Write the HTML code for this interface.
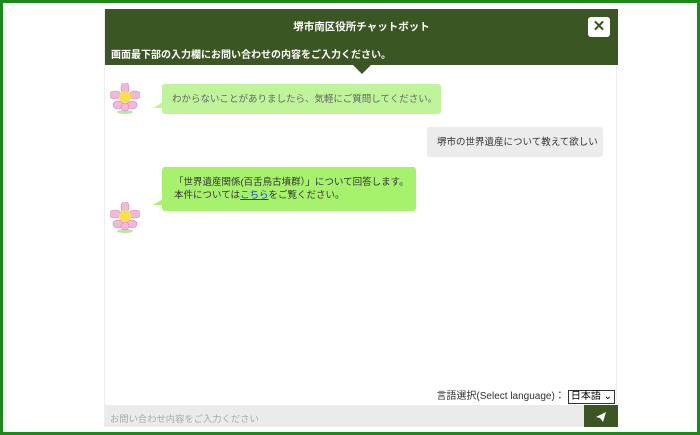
<!DOCTYPE html>
<html><head><meta charset="utf-8"><style>
*{margin:0;padding:0;box-sizing:border-box}
body{width:700px;height:435px;background:#fff;font-family:"Liberation Sans","Noto Sans CJK JP",sans-serif;position:relative;overflow:hidden}
.frame{position:absolute;left:0;top:0;width:700px;height:435px;border:3px solid #1b8a1b}
.panel{position:absolute;left:104px;top:9px;width:513px;height:418px;background:#fff;border-left:1px solid #eee;border-right:1px solid #eee}
.hdr{position:absolute;left:0;top:0;width:513px;height:56px;background:#3a5623;color:#fff}
.t{position:absolute;top:10px;width:100%;text-align:center;font-size:10.5px;font-weight:bold}
.s{position:absolute;top:37px;left:6px;font-size:10px;font-weight:bold}
.x{position:absolute;right:8px;top:8px;width:22px;height:20px;background:#fff;border-radius:3px;color:#3a5623;font-weight:bold;text-align:center;font-size:15px;line-height:20px}
.arr{position:absolute;left:248px;top:56px;border-left:9px solid transparent;border-right:9px solid transparent;border-top:9px solid #3a5623}
.b{position:absolute;font-size:9.5px;border-radius:3px;color:#444;white-space:nowrap;line-height:13px}
.b1{left:57px;top:75px;width:279px;height:30px;background:#bff49a;padding:9px 10px;color:#666}
.b1:before,.b3:before{content:"";position:absolute;left:-9px;bottom:6px;border-right:10px solid #bff49a;border-top:6px solid transparent}
.b3:before{border-right-color:#a7f26d}
.u{left:322px;top:118px;width:176px;height:30px;background:#ececec;padding:9px 10px;color:#333}
.b3{left:57px;top:158px;width:254px;height:44px;background:#a7f26d;padding:9px 12px;line-height:13px;color:#333}
.b3 a{color:#1a3fe0;text-decoration:underline}
.fl{position:absolute;width:30px;height:32px}
.lang{position:absolute;right:1px;top:381px;font-size:10px;color:#333;white-space:nowrap;line-height:14px}
.lang span{display:inline-block;border:1px solid #333;padding:0 2px;font-size:10px;color:#000;margin-left:3px;line-height:12px}
.in{position:absolute;left:0;top:396px;width:479px;height:22px;background:#ebebeb;font-size:9.3px;color:#aaa;padding:6px 5px}
.send{position:absolute;left:479px;top:396px;width:34px;height:22px;background:#3a5623}
</style></head><body>
<div class="frame"></div>
<div class="panel">
<div class="hdr"><div class="t">堺市南区役所チャットボット</div><div class="s">画面最下部の入力欄にお問い合わせの内容をご入力ください。</div><div class="x">✕</div></div>
<div class="arr"></div>
<svg class="fl" style="left:5px;top:74px" viewBox="0 0 30 32"><ellipse cx="15" cy="29" rx="8" ry="2" fill="#bde6a0"/><g fill="#f3b7da" stroke="#d28ab8" stroke-width=".6"><ellipse cx="15" cy="5" rx="4" ry="6"/><ellipse cx="5" cy="12" rx="6" ry="4"/><ellipse cx="25" cy="12" rx="6" ry="4"/><ellipse cx="8" cy="22" rx="5" ry="4"/><ellipse cx="22" cy="22" rx="5" ry="4"/><ellipse cx="15" cy="24" rx="4" ry="4"/></g><circle cx="15" cy="14" r="6" fill="#f7e04a"/></svg>
<div class="b b1">わからないことがありましたら、気軽にご質問してください。</div>
<div class="b u">堺市の世界遺産について教えて欲しい</div>
<svg class="fl" style="left:5px;top:193px" viewBox="0 0 30 32"><ellipse cx="15" cy="29" rx="8" ry="2" fill="#bde6a0"/><g fill="#f3b7da" stroke="#d28ab8" stroke-width=".6"><ellipse cx="15" cy="5" rx="4" ry="6"/><ellipse cx="5" cy="12" rx="6" ry="4"/><ellipse cx="25" cy="12" rx="6" ry="4"/><ellipse cx="8" cy="22" rx="5" ry="4"/><ellipse cx="22" cy="22" rx="5" ry="4"/><ellipse cx="15" cy="24" rx="4" ry="4"/></g><circle cx="15" cy="14" r="6" fill="#f7e04a"/></svg>
<div class="b b3">「世界遺産関係(百舌鳥古墳群）」について回答します。<br>本件については<a>こちら</a>をご覧ください。</div>
<div class="lang">言語選択(Select language)：<span>日本語 ⌄</span></div>
<div class="in">お問い合わせ内容をご入力ください</div>
<div class="send"><svg width="34" height="22" viewBox="0 0 34 22"><path d="M12 12 L22 7 L19 17 L16 13 Z" fill="#fff"/></svg></div>
</div>
</body></html>
